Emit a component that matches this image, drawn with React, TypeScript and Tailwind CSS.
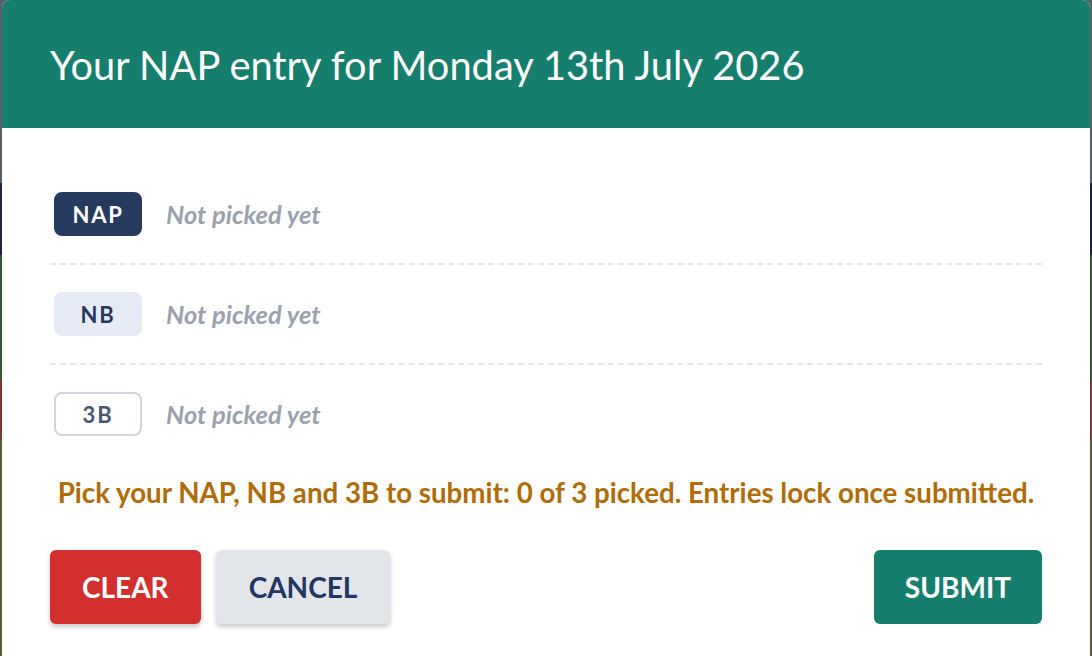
import React from "react"

const picks = [
  { key: "NAP", chip: "bg-[#263a5f] text-white border-[#263a5f]" },
  { key: "NB", chip: "bg-[#e5eaf4] text-[#263a5f] border-[#e5eaf4]" },
  { key: "3B", chip: "bg-white text-[#4b5672] border-[#cfd4de]" },
]

function Backdrop() {
  // what peeks out behind the dialog
  return (
    <div className="absolute inset-0 flex flex-col">
      <div className="h-[183px] bg-[#5b6068]" />
      <div className="h-[72px] bg-[#1c2340]" />
      <div className="h-[125px] bg-[#2f5a3a]" />
      <div className="h-[60px] bg-[#7a3a34]" />
      <div className="flex-1 bg-[#5b5a30]" />
    </div>
  )
}

export default function App() {
  return (
    <div className="relative w-[1092px] h-[656px] overflow-hidden font-['Lato','Noto_Sans',sans-serif]">
      <Backdrop />
      <div className="absolute left-[2px] right-[2px] top-0 h-[664px] bg-white rounded-[8px] overflow-hidden flex flex-col">
        <div className="h-[128px] shrink-0 bg-[#167e6c] flex items-center px-[48px] pt-[2px]">
          <h1 className="text-white text-[39.8px] leading-none">Your NAP entry for Monday 13th July 2026</h1>
        </div>
        <div className="px-[48px] pt-[37px]">
          {picks.map((p, i) => (
            <div key={p.key}>
              {i > 0 && <div className="border-t-2 border-dashed border-[#e4e6ea]" />}
              <div className="flex items-center gap-6 h-[98px]">
                <span className={"w-[88px] h-[44px] ml-[4px] rounded-[8px] border-2 flex items-center justify-center font-bold text-[22px] tracking-[0.08em] " + p.chip}>
                  {p.key}
                </span>
                <span className="italic font-bold text-[25.5px] text-[#9ca1ae]">Not picked yet</span>
              </div>
            </div>
          ))}
          <p className="mt-[12px] text-center font-bold text-[27.7px] leading-[36px] text-[#b06c06]">
            Pick your NAP, NB and 3B to submit: 0 of 3 picked. Entries lock once submitted.
          </p>
          <div className="mt-[39px] flex items-center gap-[15px]">
            <button className="h-[74px] px-[32px] rounded-[6px] bg-[#d32f2f] text-white font-bold text-[28px] shadow-[0_3px_5px_rgba(0,0,0,0.22)]">
              CLEAR
            </button>
            <button className="h-[74px] px-[33px] rounded-[6px] bg-[#e2e6eb] text-[#213761] font-bold text-[28px] shadow-[0_3px_5px_rgba(0,0,0,0.22)]">
              CANCEL
            </button>
            <button className="ml-auto h-[74px] px-[31px] rounded-[6px] bg-[#167e6c] text-white font-bold text-[28px]">
              SUBMIT
            </button>
          </div>
        </div>
      </div>
    </div>
  )
}
